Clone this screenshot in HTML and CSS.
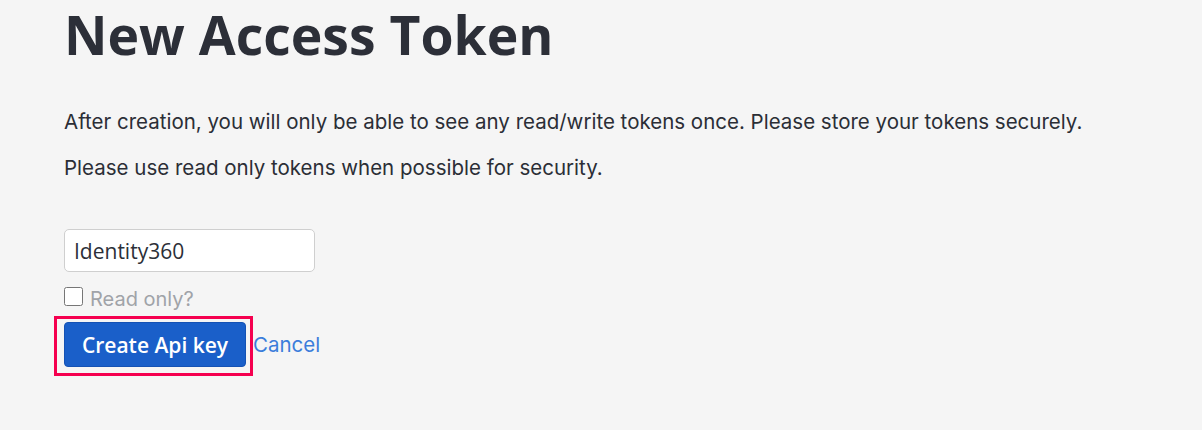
FILE: index.html
```html
<!DOCTYPE html>
<html>
<head>
<meta charset="utf-8">
<link rel="stylesheet" href="styles.css">
</head>
<body>
<main class="page">
  <h1 class="title">New Access Token</h1>
  <p class="note first">After creation, you will only be able to see any read/write tokens once. Please store your tokens securely.</p>
  <p class="note">Please use read only tokens when possible for security.</p>
  <form class="form">
    <input class="name-input" type="text" value="Identity360">
    <label class="check-row"><input type="checkbox" class="check"><span class="check-label">Read only?</span></label>
    <div class="actions">
      <div class="btn-wrap">
        <button type="button" class="btn-primary">Create Api key</button>
        <div class="highlight"></div>
      </div>
      <a class="cancel" href="#">Cancel</a>
    </div>
  </form>
</main>
</body>
</html>
```
FILE: styles.css
```css
html, body {
  margin: 0;
  padding: 0;
  background: #f5f5f5;
}
.page {
  padding: 0 0 40px 64px;
}
.title {
  margin: -2px 0 0;
  font-family: "Open Sans", sans-serif;
  font-weight: 700;
  font-size: 53.5px;
  line-height: 73px;
  color: #2c2f38;
}
.note {
  margin: 0;
  font-family: Inter, sans-serif;
  font-size: 20.5px;
  line-height: 30px;
  color: #2b2e36;
}
.note.first {
  margin-top: 36px;
  margin-bottom: 16px;
}
.form {
  margin-top: 46px;
  display: flex;
  flex-direction: column;
  align-items: flex-start;
}
.name-input {
  box-sizing: border-box;
  width: 251px;
  height: 43px;
  margin: 0;
  padding: 0 9px;
  border: 1px solid #cfcfcf;
  border-radius: 5px;
  background: #fff;
  font-family: "Open Sans", sans-serif;
  font-size: 21px;
  color: #2c2f38;
}
.check-row {
  display: flex;
  align-items: flex-start;
  margin-top: 15px;
  gap: 7px;
}
.check {
  margin: 0;
  width: 19px;
  height: 19px;
}
.check-label {
  font-family: Inter, sans-serif;
  font-size: 20px;
  line-height: 24px;
  color: #a0a3a8;
}
.actions {
  margin-top: 11px;
  display: flex;
  align-items: center;
}
.btn-wrap {
  position: relative;
  display: flex;
}
.btn-primary {
  box-sizing: border-box;
  width: 182px;
  height: 45px;
  border: 1px solid #1552b4;
  border-radius: 4px;
  background: #1a5fc9;
  color: #fff;
  font-family: "Open Sans", sans-serif;
  font-weight: 600;
  font-size: 21px;
  padding: 0;
}
.highlight {
  position: absolute;
  top: -6px;
  bottom: -9px;
  left: -10px;
  right: -7px;
  border: 3px solid #f5004f;
  pointer-events: none;
}
.cancel {
  margin-left: 7px;
  font-family: Inter, sans-serif;
  font-size: 20.5px;
  color: #3b7ddb;
  text-decoration: none;
}
```
